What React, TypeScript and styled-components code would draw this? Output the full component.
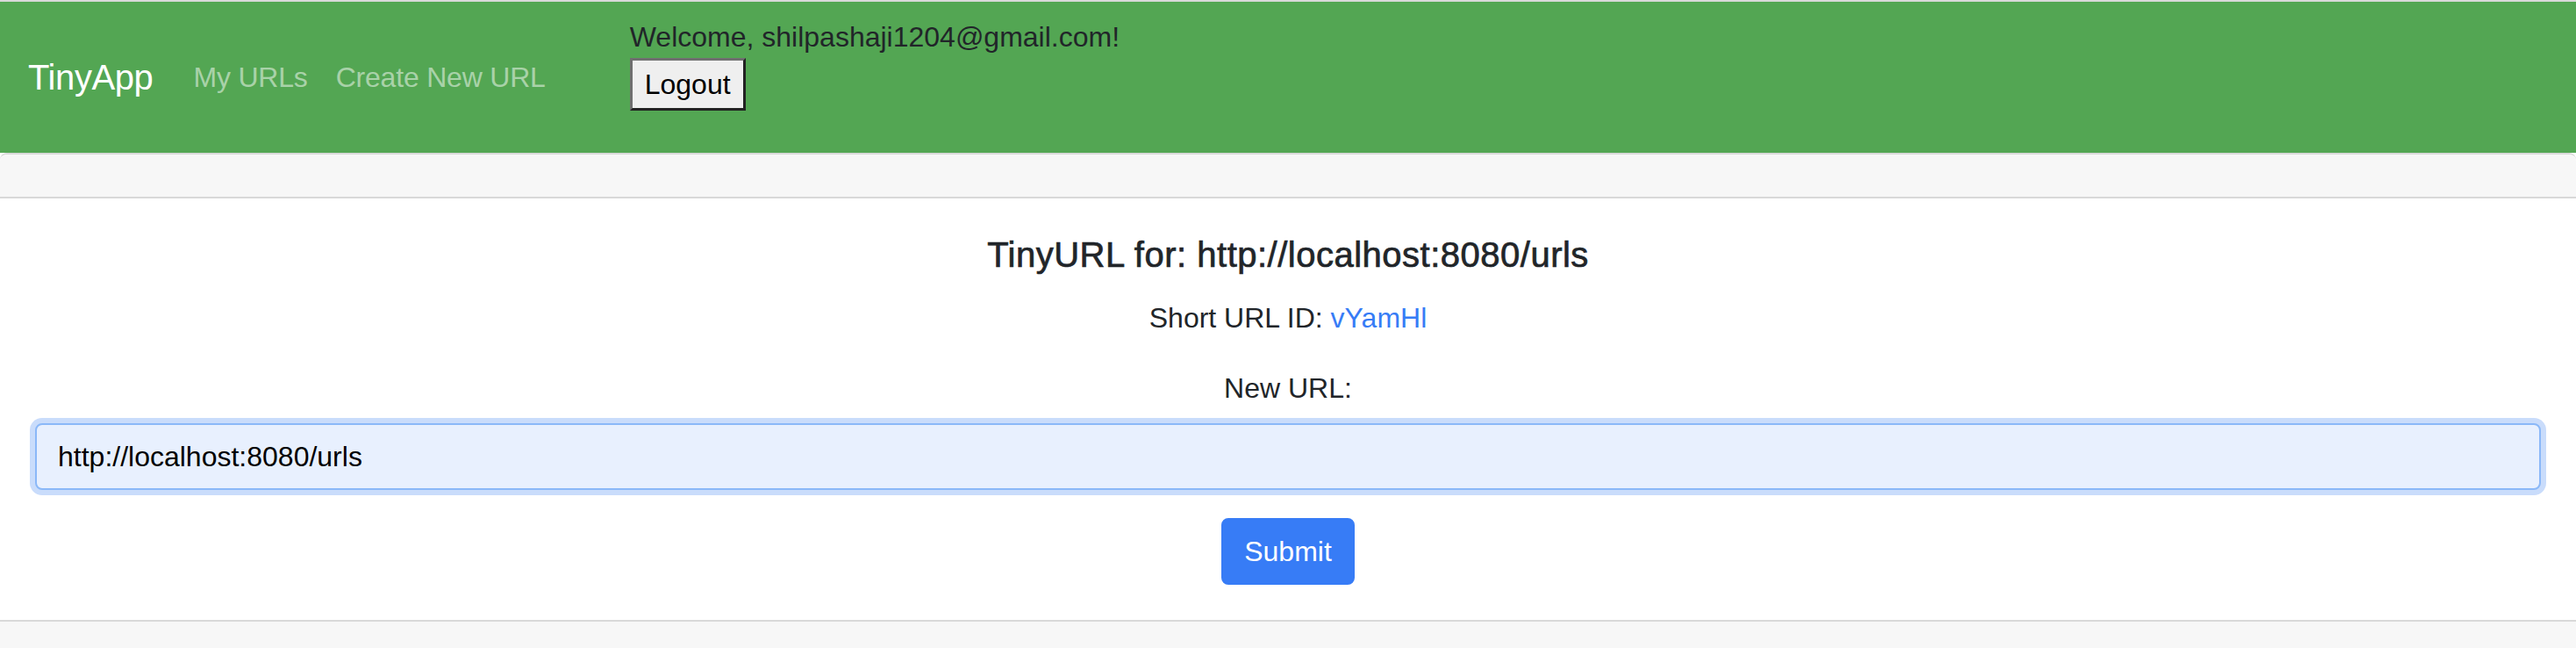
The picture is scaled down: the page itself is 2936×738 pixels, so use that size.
import React from "react";
import styled, { createGlobalStyle } from "styled-components";

const FONT = `"Liberation Sans", Arial, Helvetica, sans-serif`;

const GlobalStyle = createGlobalStyle`
  html, body { margin: 0; padding: 0; background: #ffffff; }
  body {
    font-family: ${FONT};
    color: #212529;
    font-size: 32px;
    line-height: 1.5;
  }
  * { box-sizing: border-box; }
`;

const Page = styled.div`
  border-top: 2px solid #d9d9d9;
`;

const Navbar = styled.nav`
  display: flex;
  align-items: center;
  padding: 16px 32px;
  background: #53a653;
`;

const Brand = styled.a`
  font-size: 40px;
  line-height: 60px;
  padding: 10px 0;
  margin-right: 30px;
  letter-spacing: -0.4px;
  color: #ffffff;
  text-decoration: none;
`;

const NavList = styled.div`
  display: flex;
  align-items: center;
`;

const NavLink = styled.a`
  padding: 0 16px;
  font-size: 32px;
  line-height: 48px;
  letter-spacing: -0.2px;
  color: rgba(255, 255, 255, 0.5);
  text-decoration: none;
`;

const UserBox = styled.div`
  margin-left: 80px;
  display: flex;
  flex-direction: column;
  align-items: flex-start;
`;

const Welcome = styled.div`
  font-size: 32px;
  line-height: 48px;
  color: #212529;
`;

const LogoutForm = styled.form`
  margin: 0 0 32px 0;
`;

const LogoutButton = styled.button`
  font-family: ${FONT};
  font-size: 32px;
  line-height: 38px;
  padding: 8px 14px;
  background: #efefef;
  color: #000000;
  border-style: solid;
  border-width: 3px;
  border-color: #6f6f6f #222222 #222222 #6f6f6f;
  border-radius: 0;
  cursor: pointer;
`;

const Card = styled.section`
  border-top: 2px solid #d9d9d9;
  border-radius: 8px 8px 0 0;
  background: #ffffff;
`;

const CardHeader = styled.div`
  height: 50px;
  background: #f7f7f7;
  border-bottom: 2px solid #d9d9d9;
  border-radius: 8px 8px 0 0;
`;

const CardBody = styled.div`
  padding: 40px;
  text-align: center;
`;

const Title = styled.h5`
  margin: 0 0 24px 0;
  font-size: 40px;
  font-weight: 400;
  letter-spacing: 0.5px;
  -webkit-text-stroke: 0.7px #212529;
  line-height: 48px;
  color: #212529;
`;

const Text = styled.p`
  margin: 0 0 32px 0;
  font-size: 32px;
  line-height: 48px;
`;

const IdLink = styled.a`
  color: #377cf6;
  text-decoration: none;
`;

const FormGroup = styled.div`
  margin-bottom: 32px;
`;

const Label = styled.label`
  display: inline-block;
  margin-bottom: 16px;
  font-size: 32px;
  line-height: 48px;
`;

const UrlInput = styled.input`
  display: block;
  width: 100%;
  height: 76px;
  padding: 12px 24px;
  font-family: ${FONT};
  font-size: 32px;
  line-height: 48px;
  color: #000000;
  background: #e8f0fe;
  border: 2px solid #8ab8f8;
  border-radius: 8px;
  box-shadow: 0 0 0 6px #c9dcfb;
  outline: none;
`;

const SubmitButton = styled.button`
  font-family: ${FONT};
  font-size: 32px;
  line-height: 48px;
  padding: 12px 24px;
  color: #ffffff;
  background: #377cf6;
  border: 2px solid #377cf6;
  border-radius: 8px;
  cursor: pointer;
`;

const CardFooter = styled.div`
  height: 80px;
  background: #f7f7f7;
  border-top: 2px solid #d9d9d9;
`;

export default function App() {
  const longURL = "http://localhost:8080/urls";
  return (
    <Page>
      <GlobalStyle />
      <Navbar>
        <Brand href="#">TinyApp</Brand>
        <NavList>
          <NavLink href="#">My URLs</NavLink>
          <NavLink href="#">Create New URL</NavLink>
        </NavList>
        <UserBox>
          <Welcome>Welcome, shilpashaji1204@gmail.com!</Welcome>
          <LogoutForm onSubmit={(e) => e.preventDefault()}>
            <LogoutButton type="submit">Logout</LogoutButton>
          </LogoutForm>
        </UserBox>
      </Navbar>
      <Card>
        <CardHeader />
        <CardBody>
          <Title>TinyURL for: {longURL}</Title>
          <Text>
            Short URL ID: <IdLink href="#">vYamHl</IdLink>
          </Text>
          <form onSubmit={(e) => e.preventDefault()}>
            <FormGroup>
              <Label htmlFor="longURL">New URL:</Label>
              <UrlInput id="longURL" type="text" defaultValue={longURL} />
            </FormGroup>
            <SubmitButton type="submit">Submit</SubmitButton>
          </form>
        </CardBody>
        <CardFooter />
      </Card>
    </Page>
  );
}
